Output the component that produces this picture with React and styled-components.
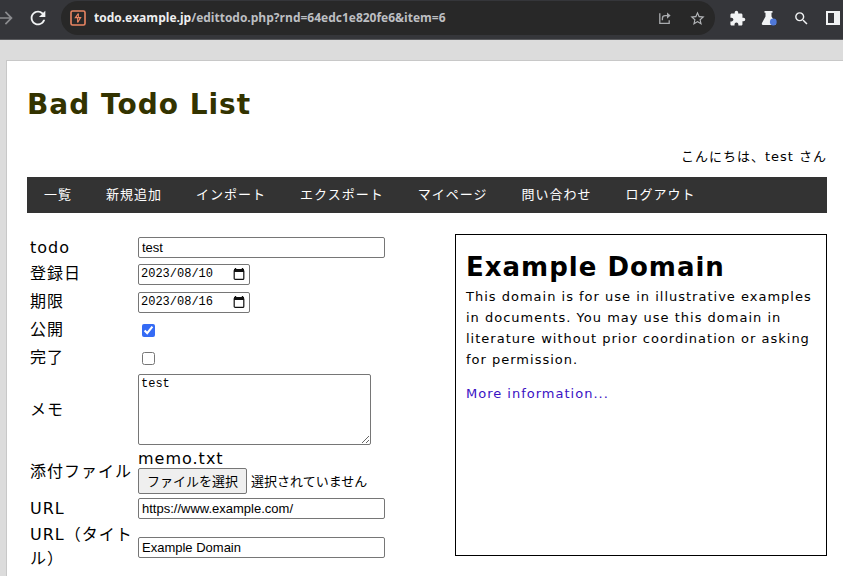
import { useRef, useState } from "react";
import styled, { createGlobalStyle } from "styled-components";
import {
  MdArrowForward,
  MdExtension,
  MdRefresh,
  MdSearch,
  MdStarBorder,
} from "react-icons/md";

const GlobalStyle = createGlobalStyle`
  * {
    box-sizing: border-box;
  }

  body {
    margin: 0;
    background: #dcdcdc;
    color: #000;
    font-family: "DejaVu Sans", "Noto Sans CJK JP", sans-serif;
    font-size: 16px;
    line-height: 24px;
    letter-spacing: 1px;
  }
`;

const Page = styled.div`
  display: flex;
  flex-direction: column;
  min-height: 100vh;
`;

const BrowserBar = styled.div`
  display: flex;
  align-items: flex-start;
  height: 40px;
  padding-top: 1px;
  overflow: hidden;
  background: #35363a;
  border-bottom: 1px solid #5a5b5e;
`;

const BarButton = styled.button`
  display: flex;
  flex: none;
  align-items: center;
  justify-content: center;
  width: 32px;
  height: 34px;
  padding: 0;
  border: 0;
  background: none;
  color: ${(props) => props.$color || "#f1f3f4"};
`;

const NavButtons = styled.div`
  display: flex;
  margin-left: -10px;
  margin-right: 7px;
`;

const ToolButtons = styled.div`
  display: flex;
  margin-left: 6px;
  margin-right: -6px;
`;

const AddressBar = styled.div`
  display: flex;
  flex: 1;
  align-items: center;
  min-width: 0;
  height: 34px;
  padding: 0 2px 0 9px;
  border-radius: 17px;
  background: #282828;
`;

const Url = styled.div`
  flex: 1;
  min-width: 0;
  margin-left: 8px;
  overflow: hidden;
  color: #bdbfc2;
  font-family: "Open Sans", sans-serif;
  font-size: 12px;
  font-weight: 700;
  letter-spacing: normal;
  white-space: nowrap;
`;

const Host = styled.span`
  color: #eeeff0;
`;

const Card = styled.div`
  flex: 1;
  margin: 20px 0 0 6px;
  padding: 20px 16px 0 20px;
  border: solid #c8c8c8;
  border-width: 1px 0 0 1px;
  background: #fff;
`;

const SiteTitle = styled.h1`
  margin: 0;
  color: #330;
  font-size: 28px;
  line-height: 48px;
`;

const Greeting = styled.p`
  margin: 18px 0 10px;
  font-size: 13px;
  line-height: 20px;
  text-align: right;
`;

const Menu = styled.nav`
  display: flex;
  background: #333;
`;

const MenuLink = styled.a`
  padding: 0 17px;
  color: #fff;
  font-size: 13px;
  line-height: 36px;
  text-decoration: none;
`;

const Content = styled.div`
  display: flex;
  align-items: flex-start;
  justify-content: space-between;
  margin-top: 21px;
`;

const Form = styled.form`
  padding: 1px 3px;
`;

const Row = styled.div`
  display: grid;
  grid-template-columns: 104px auto;
  align-items: center;
  justify-content: start;
  column-gap: 4px;
  padding: 2px 0;
  min-height: ${(props) => (props.$tall ? "28px" : "25px")};
`;

const RowLabel = styled.label`
  margin: ${(props) => (props.$tight ? "-2px 0" : "0")};
`;

const TextInput = styled.input`
  width: 247px;
  height: 21px;
  padding: 1px 3px;
  border: 1px solid #767676;
  border-radius: 2px;
  background: #fff;
  color: #000;
  font-family: "Liberation Sans", sans-serif;
  font-size: 13px;
`;

const DateBox = styled.div`
  display: flex;
  align-items: center;
  width: 112px;
  height: 21px;
  padding: 0 4px 0 2px;
  border: 1px solid #767676;
  border-radius: 2px;
  background: #fff;
`;

const DateInput = styled.input`
  flex: 1;
  min-width: 0;
  padding: 0;
  border: 0;
  outline: 0;
  background: none;
  color: #000;
  font-family: "Liberation Mono", monospace;
  font-size: 12px;
`;

const CalendarButton = styled.button`
  display: flex;
  padding: 0;
  border: 0;
  background: none;
  color: #111;
`;

const CheckBox = styled.input`
  width: 13px;
  height: 13px;
  margin: 1px 3px 0 4px;
  accent-color: #356bf5;
`;

const Memo = styled.textarea`
  display: block;
  width: 233px;
  height: 71px;
  padding: 2px;
  border: 1px solid #767676;
  border-radius: 2px;
  color: #000;
  font-family: "Liberation Mono", monospace;
  font-size: 12px;
  line-height: 14px;
`;

const FileName = styled.div`
  line-height: 19px;
`;

const FilePicker = styled.div`
  display: flex;
  align-items: center;
  gap: 4px;
  font-family: "Noto Sans CJK JP", sans-serif;
  font-size: 13px;
  letter-spacing: normal;
`;

const FileButton = styled.button`
  height: 26px;
  padding: 0 8px;
  border: 1px solid #767676;
  border-radius: 2px;
  background: #efefef;
  color: #000;
  font: inherit;
`;

const Preview = styled.aside`
  width: 372px;
  min-height: 322px;
  padding: 14px 10px;
  border: 1px solid #000;
  font-size: 13px;
  line-height: 21px;
`;

const PreviewTitle = styled.h2`
  margin: 0;
  font-size: 26px;
  line-height: 36px;
`;

const PreviewText = styled.p`
  margin: 1px 0 13px;
`;

const PreviewLink = styled.a`
  color: #3a12c4;
  text-decoration: none;
`;

const menu = [
  "一覧",
  "新規追加",
  "インポート",
  "エクスポート",
  "マイページ",
  "問い合わせ",
  "ログアウト",
];

const BurpIcon = () => (
  <svg width="16" height="16" viewBox="0 0 16 16" fill="none" stroke="#ea8562">
    <rect x="1" y="1" width="14" height="14" rx="1.5" strokeWidth="1.6" />
    <path d="M8.4 3.6 5.4 7.6h5.2L7.6 12.4" strokeWidth="1.2" />
    <path d="M8.4 3.6v4M7.6 7.6v4.8" strokeWidth="1" />
  </svg>
);

const ShareIcon = () => (
  <svg
    width="14"
    height="14"
    viewBox="0 0 14 14"
    fill="none"
    stroke="currentColor"
    strokeWidth="1.3"
  >
    <path d="M1.8 2.2v10.2h9.4V9.2" />
    <path d="M4.4 9.2V7.4q0-2.8 2.8-2.8h3" />
    <path d="m9 1.4 3.6 3.2L9 7.8z" fill="currentColor" stroke="none" />
  </svg>
);

const FlaskIcon = () => (
  <svg width="16" height="16" viewBox="0 0 16 16">
    <path
      d="M3.5 1h8v1.8h-1V6.5l4 6.3q1 2.2-1.2 2.2H2.2Q0 15 1.1 12.8l3.4-6.3V2.8h-1z"
      fill="#f1f3f4"
    />
    <circle cx="12.3" cy="12" r="3.4" fill="#4f78d8" />
  </svg>
);

const PanelIcon = () => (
  <svg width="16" height="16" viewBox="0 0 16 16">
    <path d="M1 1h14v14H1zM3 3v10h6V3z" fill="currentColor" fillRule="evenodd" />
  </svg>
);

const CalendarIcon = () => (
  <svg width="12" height="13" viewBox="0 0 12 13">
    <path d="M2.5 0v3M9.5 0v3" stroke="currentColor" strokeWidth="1.4" />
    <path d="M1 1h10v3H1z" fill="currentColor" />
    <rect
      x="1.2"
      y="2"
      width="9.6"
      height="9.4"
      rx="1"
      fill="none"
      stroke="currentColor"
      strokeWidth="1.2"
    />
  </svg>
);

const DateField = ({ id, defaultValue }) => (
  <DateBox>
    <DateInput id={id} type="text" defaultValue={defaultValue} />
    <CalendarButton type="button" aria-label="カレンダー">
      <CalendarIcon />
    </CalendarButton>
  </DateBox>
);

const FileField = ({ id }) => {
  const fileInput = useRef(null);
  const [fileName, setFileName] = useState("");

  const onChange = (e) => {
    setFileName(e.target.files[0]?.name ?? "");
  };

  return (
    <FilePicker>
      <input id={id} ref={fileInput} type="file" hidden onChange={onChange} />
      <FileButton type="button" onClick={() => fileInput.current.click()}>
        ファイルを選択
      </FileButton>
      <span>{fileName || "選択されていません"}</span>
    </FilePicker>
  );
};

const Browser = () => (
  <BrowserBar>
    <NavButtons>
      <BarButton aria-label="進む" $color="#8b8c8f">
        <MdArrowForward size={20} />
      </BarButton>
      <BarButton aria-label="再読み込み">
        <MdRefresh size={22} />
      </BarButton>
    </NavButtons>
    <AddressBar>
      <BurpIcon />
      <Url role="textbox" aria-label="アドレス" tabIndex={0}>
        <Host>todo.example.jp</Host>/edittodo.php?rnd=64edc1e820fe6&amp;item=6
      </Url>
      <BarButton aria-label="共有" $color="#a9abae">
        <ShareIcon />
      </BarButton>
      <BarButton aria-label="ブックマーク" $color="#b4b6b9">
        <MdStarBorder size={17} />
      </BarButton>
    </AddressBar>
    <ToolButtons>
      <BarButton aria-label="拡張機能">
        <MdExtension size={17} />
      </BarButton>
      <BarButton aria-label="実験">
        <FlaskIcon />
      </BarButton>
      <BarButton aria-label="検索">
        <MdSearch size={17} />
      </BarButton>
      <BarButton aria-label="サイドパネル">
        <PanelIcon />
      </BarButton>
    </ToolButtons>
  </BrowserBar>
);

const App = () => (
  <>
    <GlobalStyle />
    <Page lang="ja">
      <Browser />
      <Card>
        <SiteTitle>Bad Todo List</SiteTitle>
        <Greeting>こんにちは、test さん</Greeting>
        <Menu>
          {menu.map((item) => (
            <MenuLink key={item} href="#">
              {item}
            </MenuLink>
          ))}
        </Menu>
        <Content>
          <Form>
            <Row>
              <RowLabel htmlFor="todo" $tight>
                todo
              </RowLabel>
              <TextInput id="todo" type="text" defaultValue="test" />
            </Row>
            <Row $tall>
              <RowLabel htmlFor="registered">登録日</RowLabel>
              <DateField id="registered" defaultValue="2023/08/10" />
            </Row>
            <Row $tall>
              <RowLabel htmlFor="due">期限</RowLabel>
              <DateField id="due" defaultValue="2023/08/16" />
            </Row>
            <Row $tall>
              <RowLabel htmlFor="public">公開</RowLabel>
              <CheckBox id="public" type="checkbox" defaultChecked />
            </Row>
            <Row $tall>
              <RowLabel htmlFor="done">完了</RowLabel>
              <CheckBox id="done" type="checkbox" />
            </Row>
            <Row>
              <RowLabel htmlFor="memo">メモ</RowLabel>
              <Memo id="memo" defaultValue="test" />
            </Row>
            <Row>
              <RowLabel htmlFor="attachment">添付ファイル</RowLabel>
              <div>
                <FileName>memo.txt</FileName>
                <FileField id="attachment" />
              </div>
            </Row>
            <Row>
              <RowLabel htmlFor="url" $tight>
                URL
              </RowLabel>
              <TextInput
                id="url"
                type="text"
                defaultValue="https://www.example.com/"
              />
            </Row>
            <Row>
              <RowLabel htmlFor="urlTitle">URL（タイトル）</RowLabel>
              <TextInput
                id="urlTitle"
                type="text"
                defaultValue="Example Domain"
              />
            </Row>
          </Form>
          <Preview>
            <PreviewTitle>Example Domain</PreviewTitle>
            <PreviewText>
              This domain is for use in illustrative examples in documents. You
              may use this domain in literature without prior coordination or
              asking for permission.
            </PreviewText>
            <PreviewLink href="#">More information...</PreviewLink>
          </Preview>
        </Content>
      </Card>
    </Page>
  </>
);

export default App;
